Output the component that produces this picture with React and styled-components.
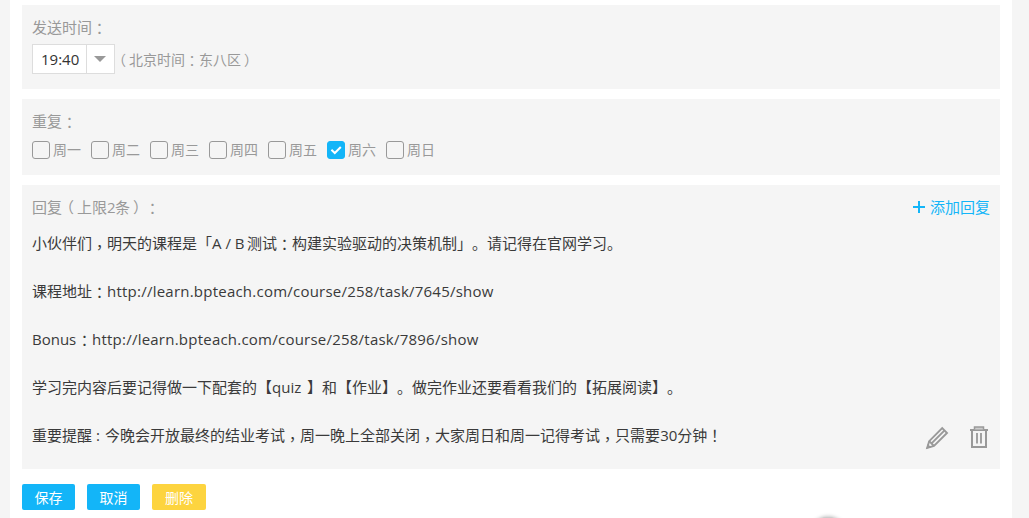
import React from 'react';
import styled, { createGlobalStyle } from 'styled-components';

const GlobalStyle = createGlobalStyle`
    * {
        box-sizing: border-box;
    }

    body {
        margin: 0;
        overflow: hidden;
        background-color: #f5f5f5;
        font-family: 'Open Sans', 'Noto Sans CJK SC', sans-serif;
        font-size: 15px;
        line-height: 24px;
        text-spacing-trim: space-all;
        color: #999;
    }
`;

const Page = styled.div`
    position: relative;
    width: 1002px;
    height: 518px;
    margin-left: 10px;
    padding: 5px 12px 0;
    overflow: hidden;
    background-color: white;
`;

const Panel = styled.section`
    height: ${({ $height }) => $height}px;
    margin-bottom: 10px;
    padding: 10px 10px 0;
    background-color: #f5f5f5;
`;

const PanelHeader = styled.div`
    display: flex;
    justify-content: space-between;
    height: 24px;
`;

const Timezone = styled.span`
    font-family: 'Noto Sans CJK SC', sans-serif;
    white-space: nowrap;
`;

const Centered = styled.span`
    font-family: 'Noto Sans CJK TC', sans-serif;
    line-height: 1;
    vertical-align: ${({ $drop }) => -($drop || 0)}px;
`;

const Paren = styled.span`
    margin-left: ${({ $shift }) => $shift}px;
    margin-right: ${({ $shift }) => -$shift}px;
`;

const Latin = styled.span`
    display: inline-block;
    width: ${({ $width }) => $width}px;
    white-space: pre;
`;

const Url = styled.span`
    letter-spacing: 0.23px;
`;

const TimeRow = styled.div`
    display: flex;
    align-items: center;
    height: 30px;
    margin-top: 5px;
    font-size: 14px;
`;

const Select = styled.div`
    display: flex;
    width: 83px;
    height: 30px;
    border: 1px solid #ddd;
    background-color: white;
    color: #333;
`;

const SelectValue = styled.div`
    width: 54px;
    padding-left: 8px;
    border-right: 1px solid #ddd;
    font-size: 15px;
    line-height: 29px;
`;

const SelectArrow = styled.div`
    flex: 1;
    display: flex;
    align-items: center;
    justify-content: center;
    padding-right: 2px;

    &::after {
        content: '';
        border: 6px solid transparent;
        border-top-color: #999;
        border-bottom: 0;
    }
`;

const Days = styled.div`
    display: flex;
    margin-top: 5px;
`;

const Day = styled.div`
    display: flex;
    align-items: center;
    gap: 3px;
    width: 59px;
    height: 24px;
    font-size: 14px;
`;

const CheckBox = styled.span`
    display: flex;
    width: 18px;
    height: 18px;
    border: 1px solid ${({ $checked }) => ($checked ? '#13b5f8' : '#999')};
    border-radius: 3px;
    background-color: ${({ $checked }) => ($checked ? '#13b5f8' : 'transparent')};
`;

const AddReply = styled.div`
    display: flex;
    align-items: center;
    gap: 5px;
    color: #13b5f8;
`;

const ReplyRow = styled.div`
    display: flex;
    align-items: flex-end;
    justify-content: space-between;
    margin-top: 12px;
`;

const Message = styled.div`
    display: grid;
    gap: 24px;
    color: #3a3a3a;
`;

const Line = styled.div`
    height: 24px;
    white-space: nowrap;
`;

const Tools = styled.div`
    display: flex;
    gap: 20px;
    margin: 0 1px -3px 0;
`;

const Actions = styled.div`
    display: flex;
    gap: 12px;
    margin-top: 15px;
`;

const Button = styled.button`
    width: ${({ $warning }) => ($warning ? 54 : 53)}px;
    height: 26px;
    padding: 0;
    border: 0;
    border-radius: 2px;
    background-color: ${({ $warning }) => ($warning ? '#fdd43f' : '#13b5f8')};
    font-family: 'Noto Sans CJK SC', sans-serif;
    font-size: 14px;
    line-height: 24px;
    color: white;
`;

const FloatingShadow = styled.div`
    position: absolute;
    top: 517px;
    left: 800px;
    width: 36px;
    height: 36px;
    border-radius: 50%;
    background-color: #ccc;
    box-shadow: 0 0 4px rgba(0, 0, 0, 0.35);
`;

const CheckMark = () => (
    <svg width="16" height="16" viewBox="0 0 16 16" fill="none" stroke="white" strokeWidth="2">
        <path d="M3.4 7.8 L6.8 11 L12.8 5" />
    </svg>
);

const Plus = () => (
    <svg width="12" height="12" viewBox="0 0 12 12" stroke="#13b5f8" strokeWidth="2">
        <path d="M0 6 H12 M6 0 V12" />
    </svg>
);

const Pencil = () => (
    <svg width="24" height="24" viewBox="0 0 24 24" fill="none" stroke="#999" strokeWidth="1.9">
        <path d="M2.2 21.8 L4.2 15.2 L17.2 2.2 L22 7 L9 20 Z" />
        <path d="M4.2 15.2 L9 20 M6.8 17.2 L19.3 4.7" />
        <path d="M1.4 22.8 L2.8 18 L6.2 21.2 Z" fill="#999" stroke="none" />
    </svg>
);

const Trash = () => (
    <svg width="20" height="24" viewBox="0 0 20 24" fill="none" stroke="#999" strokeWidth="2">
        <path d="M1 4 H19 M3 4 V21 H17 V4" />
        <path d="M5.5 3.5 V1 H14.5 V3.5" fill="#ccc" strokeWidth="1.5" />
        <path d="M8 7 V17.5 M12 7 V17.5" strokeWidth="1.8" />
    </svg>
);

const Colon = () => <Centered $drop={1}>：</Centered>;
const Comma = () => <Centered $drop={4}>，</Centered>;

const days = ['周一', '周二', '周三', '周四', '周五', '周六', '周日'];

const App = () => (
    <>
        <GlobalStyle />
        <Page>
            <Panel $height={84}>
                <PanelHeader>
                    <div>
                        发送时间
                        <Colon />
                    </div>
                </PanelHeader>
                <TimeRow>
                    <Select>
                        <SelectValue>19:40</SelectValue>
                        <SelectArrow />
                    </Select>
                    <Timezone>
                        <Paren $shift={-3}>（</Paren>北京时间
                        <Colon />
                        东八区<Paren $shift={3}>）</Paren>
                    </Timezone>
                </TimeRow>
            </Panel>

            <Panel $height={76}>
                <PanelHeader>
                    <div>
                        重复
                        <Colon />
                    </div>
                </PanelHeader>
                <Days>
                    {days.map((day) => (
                        <Day key={day}>
                            <CheckBox $checked={day === '周六'}>{day === '周六' && <CheckMark />}</CheckBox>
                            {day}
                        </Day>
                    ))}
                </Days>
            </Panel>

            <Panel $height={284}>
                <PanelHeader>
                    <div>
                        回复<Paren $shift={-3}>（</Paren>上限<Latin $width={8}>2</Latin>条
                        <Paren $shift={3}>）</Paren>
                        <Colon />
                    </div>
                    <AddReply>
                        <Plus />
                        添加回复
                    </AddReply>
                </PanelHeader>
                <ReplyRow>
                    <Message>
                        <Line>
                            小伙伴们
                            <Comma />
                            明天的课程是「<Latin $width={35}>A / B</Latin>测试
                            <Colon />
                            构建实验驱动的决策机制」。请记得在官网学习。
                        </Line>
                        <Line>
                            课程地址
                            <Colon />
                            <Url>http://learn.bpteach.com/course/258/task/7645/show</Url>
                        </Line>
                        <Line>
                            <Latin $width={45}>Bonus</Latin>
                            <Colon />
                            <Url>http://learn.bpteach.com/course/258/task/7896/show</Url>
                        </Line>
                        <Line>
                            学习完内容后要记得做一下配套的【<Latin $width={35}>quiz </Latin>
                            】和【作业】。做完作业还要看看我们的【拓展阅读】。
                        </Line>
                        <Line>
                            重要提醒<Latin $width={13}> : </Latin>
                            今晚会开放最终的结业考试
                            <Comma />
                            周一晚上全部关闭
                            <Comma />
                            大家周日和周一记得考试
                            <Comma />
                            只需要
                            <Latin $width={17}>30</Latin>分钟
                            <Centered>！</Centered>
                        </Line>
                    </Message>
                    <Tools>
                        <Pencil />
                        <Trash />
                    </Tools>
                </ReplyRow>
            </Panel>

            <Actions>
                <Button>保存</Button>
                <Button>取消</Button>
                <Button $warning>删除</Button>
            </Actions>
            <FloatingShadow />
        </Page>
    </>
);

export default App;
